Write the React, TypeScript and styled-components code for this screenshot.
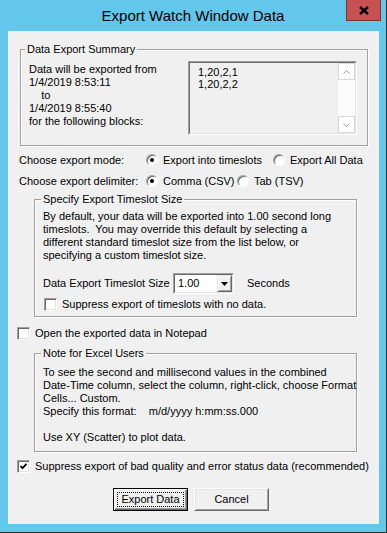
import * as React from "react";
import styled, { createGlobalStyle, css } from "styled-components";

const GlobalStyle = createGlobalStyle`
  html, body {
    margin: 0;
    padding: 0;
    background: #ffffff;
  }
  body {
    font-family: "Liberation Sans", Arial, sans-serif;
    font-size: 11px;
    color: #000;
  }
`;

const Window = styled.div`
  width: 386px;
  height: 532px;
  background: #62c7ea;
  border-right: 1px solid #2f2f2f;
  border-bottom: 1px solid #2f2f2f;
  display: flex;
  flex-direction: column;
`;

const TitleBar = styled.div`
  height: 31px;
  display: grid;
  grid-template-columns: 1fr auto 1fr;
  align-items: center;
`;

const Title = styled.div`
  grid-column: 2;
  font-size: 15px;
  line-height: 18px;
  color: #000;
`;

const CloseButton = styled.div`
  grid-column: 3;
  justify-self: end;
  align-self: start;
  width: 33px;
  height: 20px;
  margin-right: 5px;
  background: #c75050;
  border: 1px solid #7d3434;
  border-top: none;
  display: flex;
  align-items: center;
  justify-content: center;
`;

const Client = styled.div`
  flex: 1;
  margin: 0 7px 8px 8px;
  background: #f0f0f0;
  display: flex;
  flex-direction: column;
  padding-top: 12px;
  line-height: 13px;
`;

const GroupBox = styled.fieldset`
  min-width: 0;
  border: 1px solid #a0a0a0;
  box-shadow: 1px 1px 0 #fff, inset 1px 1px 0 #fff;
`;

const Legend = styled.legend<{ $offset: number }>`
  padding: 0 2px;
  margin-left: ${(p) => p.$offset}px;
  line-height: 13px;
`;

const SummaryGroup = styled(GroupBox)`
  margin: 0 11px 0 12px;
  padding: 5px 10px 10px 8px;
`;

const SummaryBody = styled.div`
  display: flex;
  justify-content: space-between;
  align-items: flex-start;
`;

const Lines = styled.div`
  white-space: pre;
  line-height: 13px;
`;

const SummaryText = styled(Lines)`
  margin-top: 2px;
`;

const ListBox = styled.div`
  width: 169px;
  height: 74px;
  box-sizing: border-box;
  border: 1px solid;
  border-color: #a0a0a0 #fff #fff #a0a0a0;
`;

const ListPane = styled.div`
  height: 100%;
  box-sizing: border-box;
  border: 1px solid;
  border-color: #696969 #e3e3e3 #e3e3e3 #696969;
  background: #f0f0f0;
  display: flex;
`;

const ListItems = styled.div`
  flex: 1;
  padding: 3px 0 0 8px;
  line-height: 12px;
`;

const ScrollBar = styled.div`
  width: 17px;
  background: #fcfcfc;
  display: flex;
  flex-direction: column;
  justify-content: space-between;
`;

const ScrollButton = styled.div`
  height: 17px;
  box-sizing: border-box;
  border: 1px solid #d9d9d9;
  background: #fff;
  display: flex;
  align-items: center;
  justify-content: center;
`;

const ChoiceRow = styled.div<{ $gap: number }>`
  margin-top: ${(p) => p.$gap}px;
  padding-left: 11px;
  height: 16px;
  display: grid;
  grid-template-columns: 127px auto auto;
  justify-content: start;
  align-items: center;
`;

const Option = styled.label<{ $width?: number }>`
  display: flex;
  align-items: center;
  gap: 5px;
  ${(p) => p.$width && css`width: ${p.$width}px;`}
`;

const Radio = styled.span<{ $on?: boolean }>`
  width: 12px;
  height: 12px;
  box-sizing: border-box;
  border-radius: 50%;
  border: 1px solid;
  border-color: #a0a0a0 #fff #fff #a0a0a0;
  box-shadow: inset 1px 1px 0 #696969;
  background: #fff;
  display: flex;
  align-items: center;
  justify-content: center;
  &::after {
    content: "";
    width: 4px;
    height: 4px;
    border-radius: 50%;
    background: ${(p) => (p.$on ? "#000" : "transparent")};
  }
`;

const TimeslotGroup = styled(GroupBox)`
  margin: 4px 22px 0 26px;
  padding: 4px 8px 5px 8px;
`;

const ComboRow = styled.div`
  margin-top: 11px;
  height: 21px;
  display: flex;
  align-items: center;
`;

const ComboLabel = styled.span`
  width: 130px;
`;

const ComboFrame = styled.div`
  width: 61px;
  height: 21px;
  box-sizing: border-box;
  border: 1px solid;
  border-color: #a0a0a0 #fff #fff #a0a0a0;
`;

const ComboField = styled.div`
  height: 100%;
  box-sizing: border-box;
  border: 1px solid;
  border-color: #696969 #e3e3e3 #e3e3e3 #696969;
  background: #fff;
  display: flex;
  align-items: center;
  justify-content: space-between;
  padding-left: 3px;
`;

const DropButton = styled.div`
  width: 15px;
  height: 17px;
  box-sizing: border-box;
  background: #f0f0f0;
  border: 1px solid;
  border-color: #e3e3e3 #696969 #696969 #e3e3e3;
  box-shadow: inset 1px 1px 0 #fff, inset -1px -1px 0 #a0a0a0;
  display: flex;
  align-items: center;
  justify-content: center;
`;

const Seconds = styled.span`
  margin-left: 13px;
`;

const CheckRow = styled.label<{ $gap: number; $indent: number }>`
  margin-top: ${(p) => p.$gap}px;
  padding-left: ${(p) => p.$indent}px;
  height: 13px;
  display: flex;
  align-items: center;
  gap: 5px;
`;

const CheckBox = styled.span`
  width: 13px;
  height: 13px;
  box-sizing: border-box;
  border: 1px solid;
  border-color: #a0a0a0 #fff #fff #a0a0a0;
  box-shadow: inset 1px 1px 0 #696969, inset -1px -1px 0 #e3e3e3;
  background: #fff;
  display: flex;
  align-items: center;
  justify-content: center;
  flex-shrink: 0;
`;

const NoteGroup = styled(GroupBox)`
  margin: 7px 22px 0 26px;
  padding: 6px 8px 7px 8px;
`;

const ButtonRow = styled.div`
  margin-top: 15px;
  padding-left: 105px;
  display: flex;
  gap: 6px;
`;

const DialogButton = styled.button<{ $default?: boolean }>`
  width: 75px;
  height: 23px;
  padding: 3px;
  box-sizing: border-box;
  font: inherit;
  color: #000;
  background: #f0f0f0;
  display: flex;
  border: 1px solid;
  ${(p) =>
    p.$default
      ? css`
          border-color: #000;
          box-shadow: inset 1px 1px 0 #fff, inset -1px -1px 0 #696969,
            inset -2px -2px 0 #a0a0a0;
        `
      : css`
          border-color: #fff #696969 #696969 #fff;
          box-shadow: inset 1px 1px 0 #e3e3e3, inset -1px -1px 0 #a0a0a0;
        `}
`;

const ButtonFace = styled.span<{ $focused?: boolean }>`
  flex: 1;
  display: flex;
  align-items: center;
  justify-content: center;
  border: 1px dotted ${(p) => (p.$focused ? "#000" : "transparent")};
`;

const Chevron = ({ up }: { up?: boolean }) => (
  <svg width="7" height="4" viewBox="0 0 7 4">
    <polyline
      points={up ? "0.5,3.5 3.5,0.5 6.5,3.5" : "0.5,0.5 3.5,3.5 6.5,0.5"}
      fill="none"
      stroke="#a0a0a0"
      strokeWidth="1"
    />
  </svg>
);

const Check = ({ checked }: { checked?: boolean }) => (
  <CheckBox>
    {checked && (
      <svg width="9" height="9" viewBox="0 0 9 9">
        <polyline
          points="1.5,4 3.5,6.2 7.5,1.8"
          fill="none"
          stroke="#000"
          strokeWidth="1.8"
        />
      </svg>
    )}
  </CheckBox>
);

const App = () => (
  <>
    <GlobalStyle />
    <Window>
      <TitleBar>
        <Title>Export Watch Window Data</Title>
        <CloseButton>
          <svg width="10" height="9" viewBox="0 0 10 9">
            <path d="M1 1 L9 8 M9 1 L1 8" stroke="#000" strokeWidth="2.4" />
          </svg>
        </CloseButton>
      </TitleBar>
      <Client>
        <SummaryGroup>
          <Legend $offset={-4}>Data Export Summary</Legend>
          <SummaryBody>
            <SummaryText>
              {"Data will be exported from\n1/4/2019 8:53:11\n    to\n1/4/2019 8:55:40\nfor the following blocks:"}
            </SummaryText>
            <ListBox>
              <ListPane>
                <ListItems>
                  <div>1,20,2,1</div>
                  <div>1,20,2,2</div>
                </ListItems>
                <ScrollBar>
                  <ScrollButton>
                    <Chevron up />
                  </ScrollButton>
                  <ScrollButton>
                    <Chevron />
                  </ScrollButton>
                </ScrollBar>
              </ListPane>
            </ListBox>
          </SummaryBody>
        </SummaryGroup>

        <ChoiceRow $gap={6}>
          <span>Choose export mode:</span>
          <Option $width={127}>
            <Radio $on />
            Export into timeslots
          </Option>
          <Option>
            <Radio />
            Export All Data
          </Option>
        </ChoiceRow>
        <ChoiceRow $gap={5}>
          <span>Choose export delimiter:</span>
          <Option $width={91}>
            <Radio $on />
            Comma (CSV)
          </Option>
          <Option>
            <Radio />
            Tab (TSV)
          </Option>
        </ChoiceRow>

        <TimeslotGroup>
          <Legend $offset={-2}>Specify Export Timeslot Size</Legend>
          <Lines>
            {"By default, your data will be exported into 1.00 second long\ntimeslots.  You may override this default by selecting a\ndifferent standard timeslot size from the list below, or\nspecifying a custom timeslot size."}
          </Lines>
          <ComboRow>
            <ComboLabel>Data Export Timeslot Size</ComboLabel>
            <ComboFrame>
              <ComboField>
                <span>1.00</span>
                <DropButton>
                  <svg width="7" height="4" viewBox="0 0 7 4">
                    <polygon points="0,0 7,0 3.5,4" fill="#000" />
                  </svg>
                </DropButton>
              </ComboField>
            </ComboFrame>
            <Seconds>Seconds</Seconds>
          </ComboRow>
          <CheckRow $gap={4} $indent={1}>
            <Check />
            Suppress export of timeslots with no data.
          </CheckRow>
        </TimeslotGroup>

        <CheckRow $gap={10} $indent={9}>
          <Check />
          Open the exported data in Notepad
        </CheckRow>

        <NoteGroup>
          <Legend $offset={-2}>Note for Excel Users</Legend>
          <Lines>
            {"To see the second and millisecond values in the combined\nDate-Time column, select the column, right-click, choose Format\nCells... Custom.\nSpecify this format:    m/d/yyyy h:mm:ss.000\n\nUse XY (Scatter) to plot data."}
          </Lines>
        </NoteGroup>

        <CheckRow $gap={8} $indent={9}>
          <Check checked />
          Suppress export of bad quality and error status data (recommended)
        </CheckRow>

        <ButtonRow>
          <DialogButton $default>
            <ButtonFace $focused>Export Data</ButtonFace>
          </DialogButton>
          <DialogButton>
            <ButtonFace>Cancel</ButtonFace>
          </DialogButton>
        </ButtonRow>
      </Client>
    </Window>
  </>
);

export default App;
